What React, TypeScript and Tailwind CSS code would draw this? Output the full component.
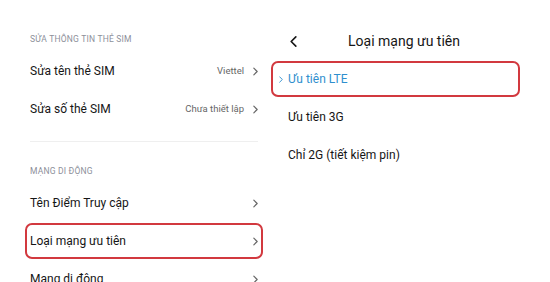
import React from 'react';

const font = { fontFamily: 'Roboto, "Noto Sans", Arial, sans-serif' };

function Chevron({ className = '' }: { className?: string }) {
  return (
    <svg viewBox="0 0 6 10" className={className} fill="none" stroke="currentColor" strokeWidth="1.4">
      <path d="M1 1l4 4-4 4" strokeLinecap="round" strokeLinejoin="round" />
    </svg>
  );
}

function Row({ label, value, active }: { label: string; value?: string; active?: boolean }) {
  return (
    <div className="h-[38px] py-px">
      <div
        className={`h-full flex items-center justify-between px-[3px] border-2 rounded-[7px] ${
          active ? 'border-[#d2393f]' : 'border-transparent'
        }`}
      >
        <span className="text-[12px] text-[#161616]">{label}</span>
        <div className="flex items-center gap-[9px]">
          {value && <span className="text-[9.5px] text-[#666666]">{value}</span>}
          <Chevron className="w-[5px] h-[9px] text-[#666666]" />
        </div>
      </div>
    </div>
  );
}

function Option({ label, active }: { label: string; active?: boolean }) {
  return (
    <div className="h-[38px] py-px">
      <div
        className={`h-full flex items-center pl-[6px] border-2 rounded-[7px] ${
          active ? 'border-[#d2393f]' : 'border-transparent'
        }`}
      >
        <div className="w-[9px] flex items-center">
          {active && <Chevron className="w-[4px] h-[7px] text-[#2f8fce]" />}
        </div>
        <span className={`text-[12px] ${active ? 'text-[#2f8fce]' : 'text-[#161616]'}`}>{label}</span>
      </div>
    </div>
  );
}

export default function App() {
  return (
    <div className="w-[550px] h-[282px] bg-white flex overflow-hidden" style={font}>
      {/* left: SIM settings */}
      <div className="w-[268px] pl-[25px] pr-[5px] pt-[30px]">
        <div className="h-[18px] leading-[18px] pl-[5px] text-[8.5px] text-[#8d909a] tracking-[0.2px]">
          SỬA THÔNG TIN THẺ SIM
        </div>
        <div className="mt-[4px]">
          <Row label="Sửa tên thẻ SIM" value="Viettel" />
          <Row label="Sửa số thẻ SIM" value="Chưa thiết lập" />
        </div>
        <div className="mt-[13px] mx-[5px] h-px bg-[#efefef]" />
        <div className="mt-[20px] h-[18px] leading-[18px] pl-[5px] text-[8.5px] text-[#8d909a] tracking-[0.2px]">
          MẠNG DI ĐỘNG
        </div>
        <div className="mt-[4px]">
          <Row label="Tên Điểm Truy cập" />
          <Row label="Loại mạng ưu tiên" active />
          <Row label="Mạng di động" />
        </div>
      </div>

      {/* right: preferred network type */}
      <div className="flex-1 pl-[3px] pr-[30px] pt-[23px]">
        <div className="h-[38px] -mt-px flex items-center">
          <Chevron className="ml-[19px] w-[7px] h-[13px] text-[#161616] rotate-180" />
          <span className="ml-[51px] text-[14px] text-[#161616]">Loại mạng ưu tiên</span>
        </div>
        <Option label="Ưu tiên LTE" active />
        <Option label="Ưu tiên 3G" />
        <Option label="Chỉ 2G (tiết kiệm pin)" />
      </div>
    </div>
  );
}
